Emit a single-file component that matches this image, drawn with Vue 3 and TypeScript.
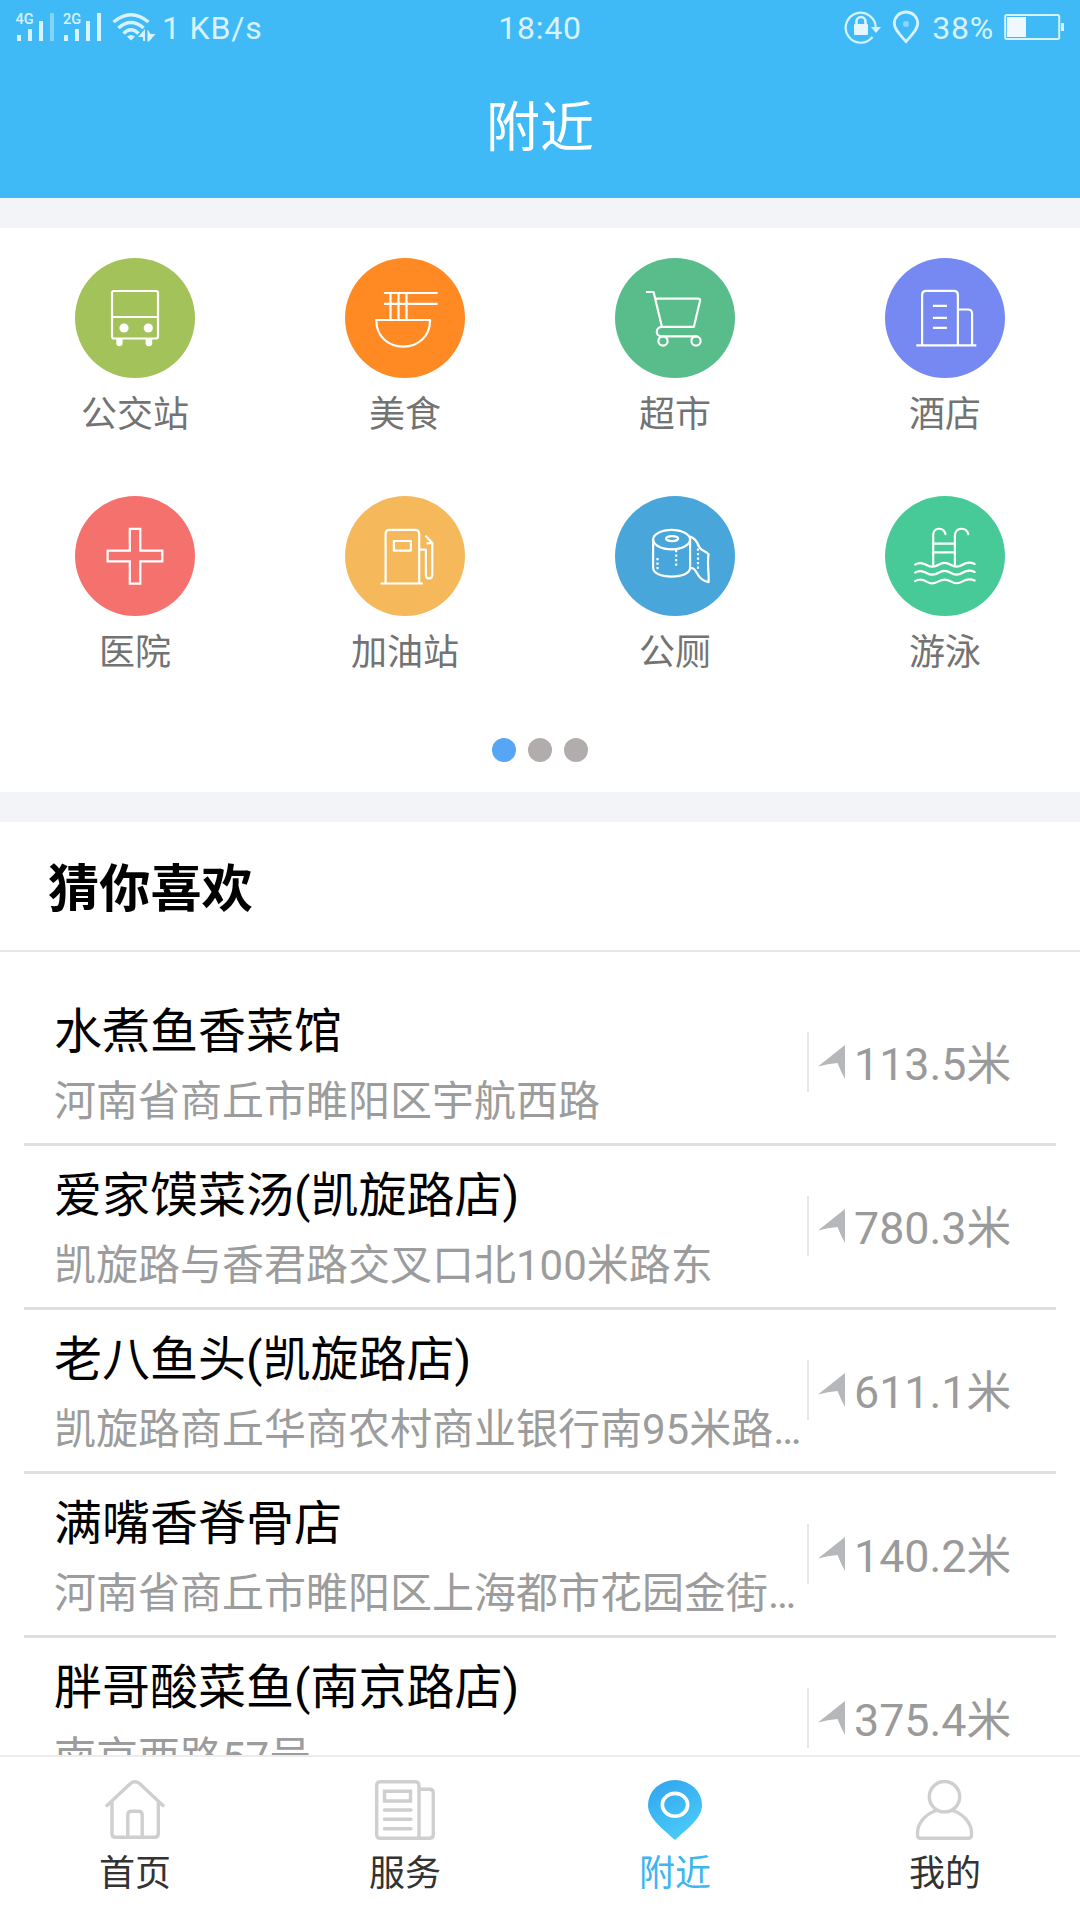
<script setup lang="ts">
interface Category {
  name: string
  color: string
  icon: string
}

interface Place {
  name: string
  address: string
  distance: string
}

interface Tab {
  label: string
  icon: string
  active?: boolean
}

const categories: Category[] = [
  { name: '公交站', color: '#a3c25a', icon: 'bus' },
  { name: '美食', color: '#ff8a24', icon: 'food' },
  { name: '超市', color: '#58bd8b', icon: 'cart' },
  { name: '酒店', color: '#7688f1', icon: 'hotel' },
  { name: '医院', color: '#f4716d', icon: 'hospital' },
  { name: '加油站', color: '#f5b95b', icon: 'gas' },
  { name: '公厕', color: '#48a6da', icon: 'toilet' },
  { name: '游泳', color: '#47ca98', icon: 'pool' },
]

const places: Place[] = [
  { name: '水煮鱼香菜馆', address: '河南省商丘市睢阳区宇航西路', distance: '113.5米' },
  { name: '爱家馍菜汤(凯旋路店)', address: '凯旋路与香君路交叉口北100米路东', distance: '780.3米' },
  { name: '老八鱼头(凯旋路店)', address: '凯旋路商丘华商农村商业银行南95米路…', distance: '611.1米' },
  { name: '满嘴香脊骨店', address: '河南省商丘市睢阳区上海都市花园金街…', distance: '140.2米' },
  { name: '胖哥酸菜鱼(南京路店)', address: '南京西路57号', distance: '375.4米' },
]

const tabs: Tab[] = [
  { label: '首页', icon: 'home' },
  { label: '服务', icon: 'service' },
  { label: '附近', icon: 'nearby', active: true },
  { label: '我的', icon: 'mine' },
]
</script>

<template>
  <div class="page">
    <header class="header">
      <div class="status">
        <div class="status-side">
          <svg class="signal" width="164" height="54" viewBox="0 0 164 54">
            <g fill="#d8f3ff">
              <text x="15.500" y="23.700" class="net">4G</text>
              <rect x="17" y="35" width="4" height="6" />
              <rect x="28" y="29" width="4" height="12" />
              <rect x="39" y="21" width="4" height="20" />
              <rect x="50" y="13" width="4" height="28" opacity="0.45" />
              <text x="63" y="23.700" class="net">2G</text>
              <rect x="64" y="35" width="4" height="6" />
              <rect x="75" y="29" width="4" height="12" />
              <rect x="86" y="21" width="4" height="20" />
              <rect x="97" y="13" width="4" height="28" />
              <path d="M127 36.5Q131 33.5 135 36.5L131 40.5Z" />
              <path d="M138 37L145 29V41H143V37ZM148 30L150.500 34H155.500L149 41.500H147.500V30Z" />
            </g>
            <g fill="none" stroke="#d8f3ff" stroke-width="3.4">
              <path d="M113.500 22Q131 7.500 148.500 22" />
              <path d="M118.500 28Q131 17 143.500 28" />
              <path d="M123.500 33.500Q131 26 138.500 33.500" />
            </g>
          </svg>
          <span>1 KB/s</span>
        </div>
        <span class="clock">18:40</span>
        <div class="status-side right">
          <svg width="78" height="54" viewBox="844 0 78 54">
            <g fill="none" stroke="#d8f3ff" stroke-width="2.2">
              <path d="M872.500 37A15 15 0 1 1 875.700 28" />
              <path d="M856.500 25V21.500A4.500 4.500 0 0 1 865.500 21.500V25" stroke-width="2.6" />
              <path d="M906 41.500C900 34.500 894.300 29.500 894.300 23.500A11.700 11.500 0 0 1 917.700 23.500C917.700 29.500 912 34.500 906 41.500Z" stroke-width="2.8" />
            </g>
            <path d="M871 27H881L876 33Z" fill="#d8f3ff" />
            <rect x="854" y="24" width="14" height="11" rx="1" fill="#e6f6ff" />
            <circle cx="906" cy="24" r="3" fill="#8bd5fa" />
          </svg>
          <span class="percent">38%</span>
          <svg class="battery" width="61" height="54" viewBox="1004 0 61 54">
            <rect x="1005.200" y="15" width="54" height="24" rx="1.500" fill="none" stroke="#d8f3ff" stroke-width="2" />
            <rect x="1007" y="17" width="19" height="20" fill="#eef8fd" />
            <rect x="1061" y="23" width="3" height="8" fill="#d8f3ff" />
          </svg>
        </div>
      </div>
      <h1 class="title">附近</h1>
    </header>

    <section class="categories">
      <div class="grid">
        <div v-for="c in categories" :key="c.name" class="category">
          <svg class="category-icon" viewBox="0 0 120 120">
            <circle cx="60" cy="60" r="60" :fill="c.color" />
            <g fill="none" stroke="#fff" stroke-width="2.2" stroke-linejoin="round" transform="translate(-0.4 -0.4)">
              <template v-if="c.icon === 'bus'">
                <rect x="37.400" y="33.400" width="46" height="47.500" rx="2" />
                <path d="M37.500 59.400H83" />
                <g fill="#fff" stroke="none">
                  <circle cx="49.400" cy="70.400" r="4.600" />
                  <circle cx="73.700" cy="70.400" r="4.600" />
                  <path d="M41.700 81H48V85.700A3.150 3 0 0 1 41.700 85.700ZM71 81H77.600V85.700A3.300 3 0 0 1 71 85.700Z" />
                </g>
              </template>
              <template v-else-if="c.icon === 'food'">
                <path d="M39.300 35.400H93M39.300 46.200H93M45.900 35V62M53.900 35V62M61.900 35V62" />
                <path d="M31.700 62.400H85.500C85.500 79 73.500 89 58.600 89S31.700 79 31.700 62.400Z" />
              </template>
              <template v-else-if="c.icon === 'cart'">
                <path d="M31.300 34.400H39L47.300 69.200M41 41H83.500Q86 41 85.400 43.300L79.300 69.200H47.300C40.500 69.500 40.500 78.700 47.300 78.700H83" />
                <circle cx="48.400" cy="83.400" r="4.600" />
                <circle cx="81.400" cy="83.400" r="4.600" />
              </template>
              <template v-else-if="c.icon === 'hotel'">
                <path d="M31.700 87.700H91.700M37.500 87.700V37.500Q37.500 33.200 41.800 33.200H69Q73.300 33.200 73.300 37.500V87.700M73 51.900H83.200Q87.500 51.900 87.500 56.200V87.700M48.300 48.300H62.300M48.300 60.300H62.300M48.300 70.300H62.300" />
              </template>
              <template v-else-if="c.icon === 'hospital'">
                <path d="M55.200 33.200H65.700V55H87.700V65.700H65.700V88H55.200V65.700H33V55H55.200Z" stroke-linejoin="miter" />
              </template>
              <template v-else-if="c.icon === 'gas'">
                <path d="M36 87.900H78.300M41 87.900V38.600Q41 34.300 45.300 34.300H70Q74.600 34.300 74.600 38.600V87.900M49.300 45.400H66.300V55H49.300ZM74.500 54H81.300V79.500Q81.300 82.900 84.400 82.900T87.700 79.500V47.500L80.900 40.200M81.900 47.600Q85 48 87 46.700" />
              </template>
              <template v-else-if="c.icon === 'toilet'">
                <ellipse cx="57" cy="44" rx="18.500" ry="9.700" />
                <ellipse cx="57.500" cy="43" rx="6" ry="2.500" />
                <path d="M38.500 44V72C38.500 78 46.500 81 57 81S75.500 78 75.500 72V44" />
                <path d="M74.500 40.700C81 42 83 47 84.500 51C86.500 56 91 54.500 94 58.700C92.300 67 94.500 77 94 86.500C87.500 85.700 84 81 82 77Q79.500 71.700 75.400 72.500" />
                <path d="M42.900 62.500V74M61.600 54.500V71.500M83.400 48.500V74" stroke-dasharray="2.200 2.300" />
              </template>
              <template v-else>
                <path d="M48.600 69V39.400C48.600 31.500 59 31 60.900 38.500M70.300 69V39.400C71.300 31.500 81.700 31 83.700 38.500M48.300 48H70M48.300 56.700H70" stroke-linecap="round" />
                <path
                  v-for="y in [68.9, 76.9, 85.5]"
                  :key="y"
                  :d="`M30.500 ${y}Q36 ${y - 3} 42 ${y + 0.5}T54 ${y + 0.3}T66 ${y + 0.3}T78 ${y + 0.3}T90 ${y - 0.5}`"
                  stroke-linecap="round"
                />
              </template>
            </g>
          </svg>
          <span class="category-name">{{ c.name }}</span>
        </div>
      </div>
      <div class="dots">
        <i v-for="n in 3" :key="n" class="dot" :class="{ on: n === 1 }"></i>
      </div>
    </section>

    <section class="guess">
      <h2 class="guess-title">猜你喜欢</h2>
      <div class="list">
        <div v-for="p in places" :key="p.name" class="place">
          <div class="info">
            <div class="place-name">{{ p.name }}</div>
            <div class="address">{{ p.address }}</div>
          </div>
          <div class="distance">
            <svg class="arrow" width="27" height="34" viewBox="0 0 27 34">
              <path d="M0 21.500L27 0V34Q23 27 19.500 18Q10 18.500 0 21.500Z" fill="#b6b7ba" />
            </svg>
            <span class="distance-text">{{ p.distance }}</span>
          </div>
        </div>
      </div>
    </section>

    <nav class="tabbar">
      <div v-for="t in tabs" :key="t.label" class="tab" :class="{ active: t.active }">
        <svg width="60" height="60" viewBox="0 0 60 60">
          <g fill="none" stroke="#cfcfcf" stroke-width="3.4" stroke-linejoin="round" stroke-linecap="round">
            <template v-if="t.icon === 'home'">
              <path d="M2 25.500L25.500 3.500Q30 0 34.500 3.500L58 25.500M7 22.500V53.500Q7 57.300 10.800 57.300H49.500Q53.300 57.300 53.300 53.500V22.500M22.800 57V35Q22.800 31.300 26.500 31.300H33.500Q37.200 31.300 37.200 35V57" />
            </template>
            <template v-else-if="t.icon === 'service'">
              <path d="M5.500 1.700H40Q44 1.700 44 5.700V58.300H5.500Q1.700 58.300 1.700 54.500V5.500Q1.700 1.700 5.500 1.700ZM44 9.300H54.500Q58.300 9.300 58.300 13V54.500Q58.300 58.300 54.500 58.300H44" />
              <path d="M9.500 11.300H35.500V21H9.500ZM9.500 30H36M9.500 39.300H36M9.500 48.700H36" stroke-linejoin="miter" />
            </template>
            <template v-else-if="t.icon === 'mine'">
              <circle cx="29.500" cy="16.700" r="15.200" />
              <path d="M21.500 30.500C9 34.500 2.500 44.500 2.500 53V55Q2.500 58.300 5.800 58.300H53.200Q56.500 58.300 56.500 55V53C56.500 44.500 50 34.500 37.500 30.500" />
            </template>
          </g>
          <template v-if="t.icon === 'nearby'">
            <defs>
              <linearGradient id="pin" x1="0.2" y1="0" x2="0.7" y2="1">
                <stop offset="0" stop-color="#32a6f0" />
                <stop offset="1" stop-color="#4bcdf8" />
              </linearGradient>
            </defs>
            <path d="M30 60C18 49 3 38.500 3 25A27 25 0 0 1 57 25C57 38.500 42 49 30 60Z" fill="url(#pin)" />
            <ellipse cx="30" cy="24.800" rx="12.700" ry="11.400" fill="none" stroke="#fff" stroke-width="3.600" />
          </template>
        </svg>
        <span class="tab-label">{{ t.label }}</span>
      </div>
    </nav>
  </div>
</template>

<style>
body {
  margin: 0;
}
</style>

<style scoped>
.page {
  width: 1080px;
  height: 1920px;
  display: flex;
  flex-direction: column;
  overflow: hidden;
  background: #f2f4f8;
  font-family: Roboto, 'Noto Sans CJK SC', sans-serif;
}
svg {
  display: block;
  flex: none;
}
.header {
  flex: none;
  height: 198px;
  background: #40baf6;
  color: #fff;
}
.status {
  display: flex;
  align-items: flex-start;
  height: 54px;
  font-size: 32px;
  line-height: 56px;
  letter-spacing: 0.8px;
  color: #d8f3ff;
}
.status-side {
  flex: 1 1 0;
  display: flex;
  align-items: flex-start;
}
.status-side.right {
  justify-content: flex-end;
}
.battery {
  margin-right: 15px;
}
.signal {
  margin-right: -2px;
}
.net {
  font-size: 14.5px;
  font-weight: 500;
  letter-spacing: 0;
}
.percent {
  margin: 0 10px 0 10px;
}
.title {
  margin: 0;
  padding-top: 3px;
  font-size: 54px;
  font-weight: 400;
  line-height: 144px;
  text-align: center;
}
.categories {
  flex: none;
  height: 564px;
  margin: 30px 0;
  background: #fff;
}
.grid {
  display: grid;
  grid-template-columns: repeat(4, 1fr);
  grid-auto-rows: 238px;
  padding-top: 30px;
}
.category {
  display: flex;
  flex-direction: column;
  align-items: center;
}
.category-icon {
  width: 120px;
  height: 120px;
}
.category-name {
  margin-top: 11px;
  font-size: 36px;
  line-height: 52px;
  color: #737373;
}
.dots {
  display: flex;
  justify-content: center;
  gap: 12px;
  margin-top: 4px;
}
.dot {
  width: 24px;
  height: 24px;
  border-radius: 50%;
  background: #b1adad;
}
.dot.on {
  background: #57a5f5;
}
.guess {
  flex: 1;
  min-height: 0;
  overflow: hidden;
  background: #fff;
}
.guess-title {
  margin: 0;
  padding: 3px 0 0 48px;
  font-size: 51.2px;
  font-weight: 700;
  line-height: 125px;
  height: 125px;
  color: #000;
  border-bottom: 2px solid #e6e6e6;
}
.guess-title {
  padding-top: 5px;
  height: 123px;
}
.list {
  padding: 30px 24px 0;
}
.place {
  display: flex;
  height: 161px;
  border-bottom: 3px solid #dfdfdf;
}
.info {
  width: 753px;
  padding-left: 30px;
  white-space: nowrap;
}
.place-name {
  margin-top: 15px;
  font-size: 48px;
  line-height: 70px;
  color: #000;
}
.address {
  font-size: 42px;
  line-height: 70px;
  color: #9c9c9c;
}
.distance {
  display: flex;
  align-items: center;
  height: 60px;
  margin-top: 50px;
  padding-left: 9px;
  border-left: 2px solid #e6e6e6;
  font-size: 44.8px;
  line-height: 60px;
  color: #9a9a9a;
  white-space: nowrap;
}
.distance-text {
  padding-top: 5px;
}
.arrow {
  margin-right: 9px;
}
.tabbar {
  flex: none;
  display: flex;
  height: 163px;
  border-top: 2px solid #ececec;
  background: #fff;
}
.tab {
  flex: 1;
  display: flex;
  flex-direction: column;
  align-items: center;
  padding-top: 23px;
}
.tab-label {
  margin-top: 8px;
  font-size: 36px;
  line-height: 52px;
  color: #333;
}
.tab.active .tab-label {
  color: #3fb5f0;
}
</style>
